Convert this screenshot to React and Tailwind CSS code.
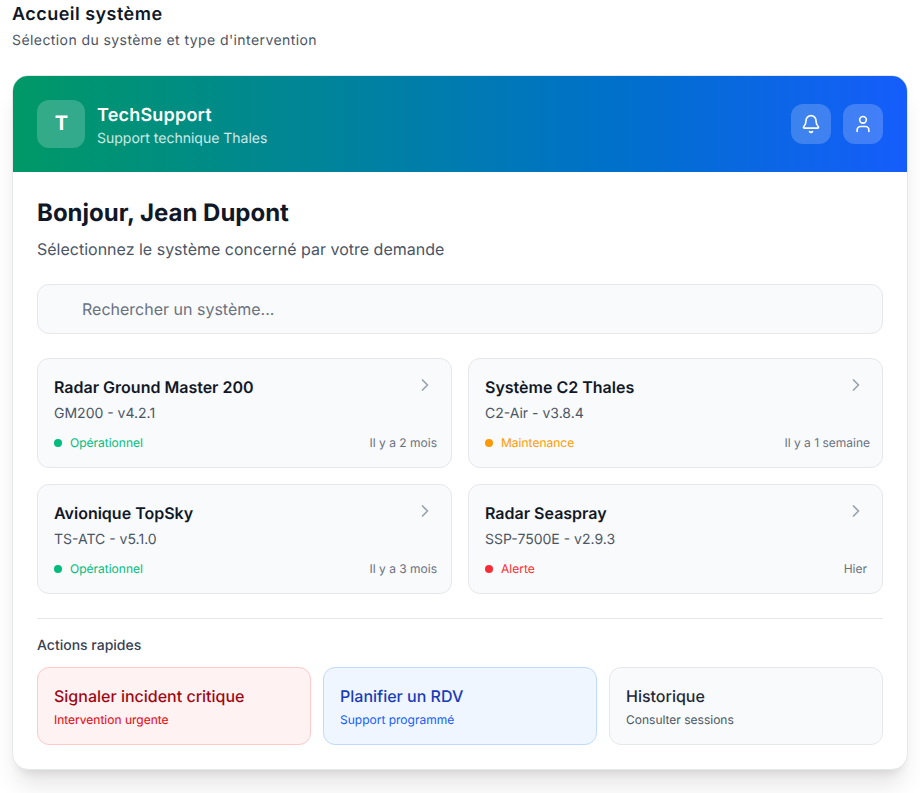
import React from 'react'
import { Bell, ChevronRight, User } from 'lucide-react'

const systems = [
  { name: 'Radar Ground Master 200', version: 'GM200 - v4.2.1', status: 'Opérationnel', dot: 'bg-emerald-500', text: 'text-emerald-500', time: 'Il y a 2 mois', shift: '-mr-[2px]' },
  { name: 'Système C2 Thales', version: 'C2-Air - v3.8.4', status: 'Maintenance', dot: 'bg-amber-500', text: 'text-amber-500', time: 'Il y a 1 semaine', shift: '-mr-[4px]' },
  { name: 'Avionique TopSky', version: 'TS-ATC - v5.1.0', status: 'Opérationnel', dot: 'bg-emerald-500', text: 'text-emerald-500', time: 'Il y a 3 mois', shift: '-mr-[2px]' },
  { name: 'Radar Seaspray', version: 'SSP-7500E - v2.9.3', status: 'Alerte', dot: 'bg-red-500', text: 'text-red-500', time: 'Hier', shift: '-mr-px' },
]

const actions = [
  { title: 'Signaler incident critique', sub: 'Intervention urgente', box: 'bg-red-50 border-red-200', head: 'text-red-800', body: 'text-red-600' },
  { title: 'Planifier un RDV', sub: 'Support programmé', box: 'bg-blue-50 border-blue-200', head: 'text-blue-800', body: 'text-blue-600' },
  { title: 'Historique', sub: 'Consulter sessions', box: 'bg-gray-50 border-gray-200', head: 'text-gray-800', body: 'text-gray-600' },
]

const SystemCard = ({ system }) => (
  <div className="h-[110px] rounded-xl border border-gray-200 bg-gray-50 p-4">
    <div className="flex items-start justify-between">
      <div>
        <h3 className="font-semibold text-gray-900">{system.name}</h3>
        <p className="mt-[5px] text-sm text-gray-600">{system.version}</p>
      </div>
      <ChevronRight className="h-5 w-5 text-gray-400" />
    </div>
    <div className="mt-[11px] flex items-center justify-between whitespace-nowrap text-xs">
      <div className="flex items-center gap-2">
        <span className={`h-2 w-2 rounded-full ${system.dot}`} />
        <span className={system.text}>{system.status}</span>
      </div>
      <span className={`text-gray-500 ${system.shift}`}>{system.time}</span>
    </div>
  </div>
)

export default function App() {
  return (
    <div className="min-h-[793px] bg-white px-3 pt-px font-['Inter',sans-serif] [text-rendering:geometricPrecision]">
      <h1 className="text-lg leading-7 font-semibold tracking-[0.47px] text-gray-900">Accueil système</h1>
      <p className="mt-0.5 text-sm tracking-[0.42px] text-gray-600">Sélection du système et type d'intervention</p>

      <div className="mt-6 overflow-hidden rounded-2xl border border-gray-200 bg-white shadow-xl">
        <div className="flex items-center justify-between bg-linear-to-r/srgb from-emerald-600 to-blue-600 p-6">
          <div className="flex items-center gap-3">
            <div className="flex h-12 w-12 items-center justify-center rounded-xl bg-white/20 pb-0.5 pl-px text-xl font-bold text-white">T</div>
            <div className="h-12">
              <div className="mt-[3px] text-lg leading-[26px] font-semibold tracking-[0.2px] text-white">TechSupport</div>
              <div className="text-sm text-white/80">Support technique Thales</div>
            </div>
          </div>
          <div className="flex gap-3">
            <button className="flex h-10 w-10 items-center justify-center rounded-xl bg-white/20 text-white">
              <Bell className="h-5 w-5" />
            </button>
            <button className="flex h-10 w-10 items-center justify-center rounded-xl bg-white/20 text-white">
              <User className="h-5 w-5" />
            </button>
          </div>
        </div>

        <div className="p-6">
          <h2 className="mt-px text-2xl font-bold text-gray-900">Bonjour, Jean Dupont</h2>
          <p className="mt-2 text-gray-600">Sélectionnez le système concerné par votre demande</p>

          <div className="mt-[23px] flex h-[50px] items-center rounded-xl border border-gray-200 bg-gray-50 pl-11 text-gray-500">
            Rechercher un système...
          </div>

          <div className="mt-6 grid grid-cols-2 gap-4">
            {systems.map((system) => (
              <SystemCard key={system.name} system={system} />
            ))}
          </div>

          <div className="mt-6 border-t border-gray-200 pt-[17px]">
            <h4 className="text-sm font-medium text-gray-700">Actions rapides</h4>
            <div className="mt-[11px] grid grid-cols-3 gap-3">
              {actions.map((action) => (
                <div key={action.title} className={`rounded-xl border p-4 ${action.box}`}>
                  <div className={`font-medium ${action.head}`}>{action.title}</div>
                  <div className={`mt-1 text-xs ${action.body}`}>{action.sub}</div>
                </div>
              ))}
            </div>
          </div>
        </div>
      </div>
    </div>
  )
}
